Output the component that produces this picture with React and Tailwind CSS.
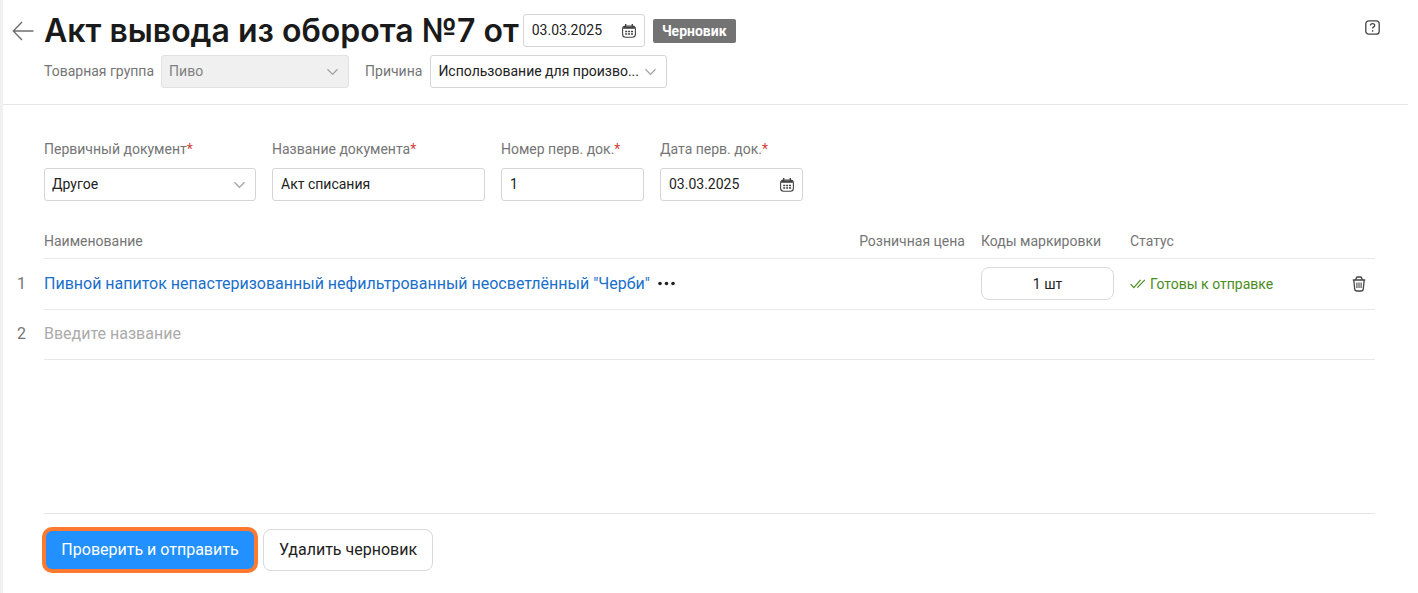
import React from 'react';

const FIELD = 'h-[33px] w-full rounded-[3px] border border-[#d5d5d5] bg-white pb-0.5 text-sm text-[#222]';

function Chevron() {
  return (
    <svg className="pointer-events-none absolute right-2.5 top-1/2 -translate-y-1/2" width="12" height="8" viewBox="0 0 12 8" fill="none" stroke="#a3a3a3" strokeWidth="1.3">
      <path d="M.5 1.2 5.500 6.400 10.500 1.200" />
    </svg>
  );
}

function CalendarIcon() {
  return (
    <svg width="14" height="14" viewBox="0 0 14 14" fill="none" stroke="#444">
      <rect x="0.6" y="2.1" width="12.8" height="11.2" rx="3" strokeWidth="1.1" />
      <path d="M1.200 3.800h11.600" strokeWidth="2" />
      <path d="M3.7 0v3M10.3 0v3" strokeWidth="1.4" />
      <path d="M3.2 7.5h7.8M3.2 10h7.8" strokeWidth="1.4" strokeDasharray="2 0.9" />
    </svg>
  );
}

function TrashIcon() {
  return (
    <svg width="14" height="16" viewBox="0 0 14 16" fill="none" stroke="#444" strokeWidth="1.3">
      <path d="M0.8 4h12.4M3.600 4l.8-2.200Q4.700 1 5.600 1h2.800q.9 0 1.200.8L10.400 4" />
      <path d="M1.8 4l.9 8.9Q2.9 15 5 15h4q2.100 0 2.300-2.100L12.200 4" />
      <path d="M4.900 6.500v5.500M7 6.500v5.500M9.100 6.500v5.500" strokeWidth="1.100" />
    </svg>
  );
}

function Select({ id, value, disabled = false }) {
  return (
    <div className="relative w-full">
      <select
        id={id}
        disabled={disabled}
        className={`${FIELD} appearance-none px-[7px] disabled:border-[#e2e2e2] disabled:bg-[#f0f0f0] disabled:text-[#808080] disabled:opacity-100`}
      >
        <option>{value}</option>
      </select>
      <Chevron />
    </div>
  );
}

function DateField({ id, label, value }) {
  return (
    <div className="relative w-full">
      <input id={id} type="text" aria-label={label} defaultValue={value} className={`${FIELD} px-2`} />
      <button type="button" aria-label="Открыть календарь" className="absolute right-[9px] top-1/2 -translate-y-1/2">
        <CalendarIcon />
      </button>
    </div>
  );
}

function Field({ id, label, width, children }) {
  return (
    <div className={`flex flex-col gap-[9px] ${width}`}>
      <label htmlFor={id} className="whitespace-nowrap text-sm text-[#757575]">
        {label}<span className="text-[#d0433a]">*</span>
      </label>
      {children}
    </div>
  );
}

function Header() {
  return (
    <header className="flex items-start border-b border-[#e5e5e5] pb-4 pl-[9px] pr-7 pt-3.5">
      <button type="button" aria-label="Назад" className="mr-2.5 flex h-[33px] items-center">
        <svg width="22" height="20" viewBox="0 0 22 20" fill="none" stroke="#6e6e6e" strokeWidth="1.4">
          <path d="M21.500 10H1.500M10 1 1.300 10 10 19" />
        </svg>
      </button>
      <div className="flex grow flex-col gap-2">
        <div className="flex items-center">
          <h1 className="whitespace-nowrap font-[Inter] text-[32px] font-semibold leading-[33px] text-[#1a1a1a]">
            Акт вывода из оборота №7 от
          </h1>
          <div className="ml-1 mr-2 w-[122px]">
            <DateField id="act-date" label="Дата акта" value="03.03.2025" />
          </div>
          <span className="flex h-6 w-[83px] items-center justify-center rounded-xs bg-[#737373] text-sm font-bold text-white">Черновик</span>
        </div>
        <div className="flex items-center">
          <label htmlFor="group" className="mr-[7px] pb-0.5 text-sm text-[#757575]">Товарная группа</label>
          <div className="mr-4 w-[188px]"><Select id="group" value="Пиво" disabled /></div>
          <label htmlFor="reason" className="mr-2 pb-0.5 text-sm text-[#757575]">Причина</label>
          <div className="w-[237px]"><Select id="reason" value="Использование для произво..." /></div>
        </div>
      </div>
      <button type="button" aria-label="Справка" className="mt-1.5">
        <svg width="15" height="15" viewBox="0 0 15 15" fill="none" stroke="#444" strokeWidth="1.300">
          <rect x="0.800" y="0.800" width="13.400" height="13.400" rx="3" />
          <path d="M5.400 5.600c0-2.700 4.300-2.700 4.300-.2 0 1.500-2.100 1.500-2.100 3.200M7.600 10.200v1.500" />
        </svg>
      </button>
    </header>
  );
}

function ItemsTable() {
  const line = 'border-b border-[#e8e8e8]';
  return (
    <table className="mt-6 w-full table-fixed border-collapse text-left">
      <thead>
        <tr className="h-[33px] text-sm text-[#757575]">
          <td className="w-[27px]"></td>
          <th className={`${line} font-normal`}>Наименование</th>
          <th className={`${line} w-[140px] pr-4 text-right font-normal`}>Розничная цена</th>
          <th className={`${line} w-[149px] font-normal`}>Коды маркировки</th>
          <th className={`${line} w-[200px] font-normal`}>Статус</th>
          <td className={`${line} w-[45px]`}></td>
        </tr>
      </thead>
      <tbody>
        <tr className="h-[51px]">
          <td className="text-base text-[#757575]">1</td>
          <td className={line}>
            <div className="flex items-center gap-2">
              <a href="#item" className="whitespace-nowrap text-base text-[#1a6fcb]">
                Пивной напиток непастеризованный нефильтрованный неосветлённый "Черби"
              </a>
              <button type="button" aria-label="Действия">
                <svg width="17" height="5" viewBox="0 0 17 5" fill="#222">
                  <circle cx="2" cy="2.500" r="1.800" />
                  <circle cx="8.500" cy="2.500" r="1.800" />
                  <circle cx="15" cy="2.500" r="1.800" />
                </svg>
              </button>
            </div>
          </td>
          <td className={line}></td>
          <td className={line}>
            <button type="button" className="block h-[33px] w-[133px] rounded-lg border border-[#d9d9d9] text-sm text-[#222]">1 шт</button>
          </td>
          <td className={line}>
            <div className="flex items-center gap-1 whitespace-nowrap text-sm text-[#4a8c1c]">
              <svg width="16" height="10" viewBox="0 0 16 10" fill="none" stroke="#4a8c1c" strokeWidth="1.200">
                <path d="M.6 5.200 3.800 8.600 10.600.8M7.400 8.600 14.800.8" />
              </svg>
              Готовы к отправке
            </div>
          </td>
          <td className={line}>
            <button type="button" aria-label="Удалить строку" className="ml-auto mr-[9px] block">
              <TrashIcon />
            </button>
          </td>
        </tr>
        <tr className="h-[50px]">
          <td className="text-base text-[#757575]">2</td>
          <td colSpan={5} className={line}>
            <input
              type="text"
              aria-label="Наименование товара"
              placeholder="Введите название"
              className="w-full text-base placeholder:text-[#ababab]"
            />
          </td>
        </tr>
      </tbody>
    </table>
  );
}

export default function App() {
  return (
    <div className="min-h-screen border-l-3 border-[#f0f0f0] bg-white pr-2.5 font-[Roboto,sans-serif]">
      <div className="flex min-h-screen flex-col">
        <Header />

        <main className="grow pl-3.5 pr-[33px] pt-[34px]">
          <div className="flex gap-4 pl-[27px]">
            <Field id="doc-type" label="Первичный документ" width="w-[212px]">
              <Select id="doc-type" value="Другое" />
            </Field>
            <Field id="doc-name" label="Название документа" width="w-[213px]">
              <input id="doc-name" type="text" defaultValue="Акт списания" className={`${FIELD} px-2`} />
            </Field>
            <Field id="doc-number" label="Номер перв. док." width="w-[143px]">
              <input id="doc-number" type="text" defaultValue="1" className={`${FIELD} px-2`} />
            </Field>
            <Field id="doc-date" label="Дата перв. док." width="w-[143px]">
              <DateField id="doc-date" value="03.03.2025" />
            </Field>
          </div>
          <ItemsTable />
        </main>

        <footer className="ml-[41px] mr-[33px] flex gap-[7px] border-t border-[#e5e5e5] pb-[22px] pt-[15px]">
          <button type="button" className="h-[42px] w-[212px] rounded-lg bg-[#2291ff] text-base text-white outline-4 -outline-offset-2 outline-[#ff7a30]">
            Проверить и отправить
          </button>
          <button type="button" className="h-[42px] w-[170px] rounded-lg border border-[#d9d9d9] text-base text-[#222]">
            Удалить черновик
          </button>
        </footer>
      </div>
    </div>
  );
}
